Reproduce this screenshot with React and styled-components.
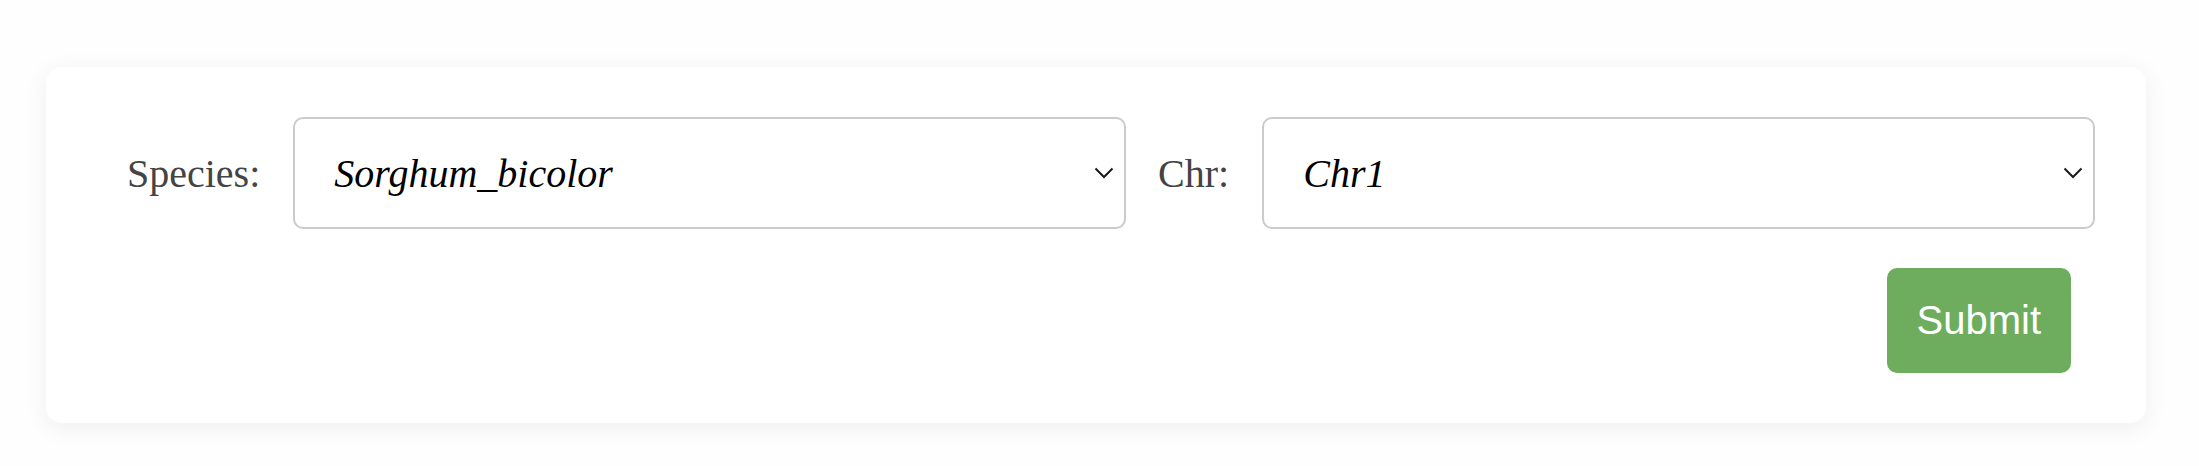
import React from 'react';
import styled, { createGlobalStyle } from 'styled-components';

const GlobalStyle = createGlobalStyle`
  html, body {
    margin: 0;
    padding: 0;
    background: #fefefe;
  }
`;

const Page = styled.div`
  padding: 67px 53px 43px 46px;
  font-family: 'Liberation Serif', 'Times New Roman', serif;
`;

const Card = styled.form`
  background: #fff;
  border-radius: 16px;
  box-shadow: 0 5px 24px rgba(0, 0, 0, 0.065);
  padding: 50px 51px 50px 50px;
`;

const FieldRow = styled.div`
  display: flex;
  align-items: center;
  padding-left: 31px;
`;

const Label = styled.label`
  font-size: 40px;
  color: #444;
  margin: ${(p) => (p.$first ? '0 33px 0 0' : '0 33px 0 32px')};
  white-space: nowrap;
`;

const SelectWrap = styled.div`
  position: relative;
  flex: 1 1 0;
  min-width: 0;
`;

const Select = styled.select`
  appearance: none;
  -webkit-appearance: none;
  width: 100%;
  height: 112px;
  box-sizing: border-box;
  border: 2px solid #cbcbcb;
  border-radius: 10px;
  background: #fff;
  padding: 0 40px 0 39px;
  font-family: 'Liberation Serif', 'Times New Roman', serif;
  font-style: italic;
  font-size: 40px;
  color: #000;
  outline: none;
`;

const Chevron = styled.svg`
  position: absolute;
  right: 12px;
  top: 50%;
  margin-top: -6px;
  pointer-events: none;
`;

const ActionRow = styled.div`
  display: flex;
  justify-content: flex-end;
  margin-top: 39px;
  padding-right: 24px;
`;

const SubmitButton = styled.button`
  height: 105px;
  padding: 0 30px;
  border: none;
  border-radius: 10px;
  background: #6dad5d;
  color: #fff;
  font-family: 'Liberation Sans', Arial, sans-serif;
  font-size: 40px;
  cursor: pointer;
`;

const Dropdown = ({ options }) => (
  <SelectWrap>
    <Select defaultValue={options[0]}>
      {options.map((o) => (
        <option key={o} value={o}>
          {o}
        </option>
      ))}
    </Select>
    <Chevron width="20" height="12" viewBox="0 0 20 12">
      <path d="M1.5 1.5 L10 10 L18.5 1.5" fill="none" stroke="#1a1a1a" strokeWidth="2" />
    </Chevron>
  </SelectWrap>
);

const App = () => {
  return (
    <Page>
      <GlobalStyle />
      <Card onSubmit={(e) => e.preventDefault()}>
        <FieldRow>
          <Label $first>Species:</Label>
          <Dropdown options={['Sorghum_bicolor']} />
          <Label>Chr:</Label>
          <Dropdown options={['Chr1', 'Chr2', 'Chr3']} />
        </FieldRow>
        <ActionRow>
          <SubmitButton type="submit">Submit</SubmitButton>
        </ActionRow>
      </Card>
    </Page>
  );
};

export default App;
